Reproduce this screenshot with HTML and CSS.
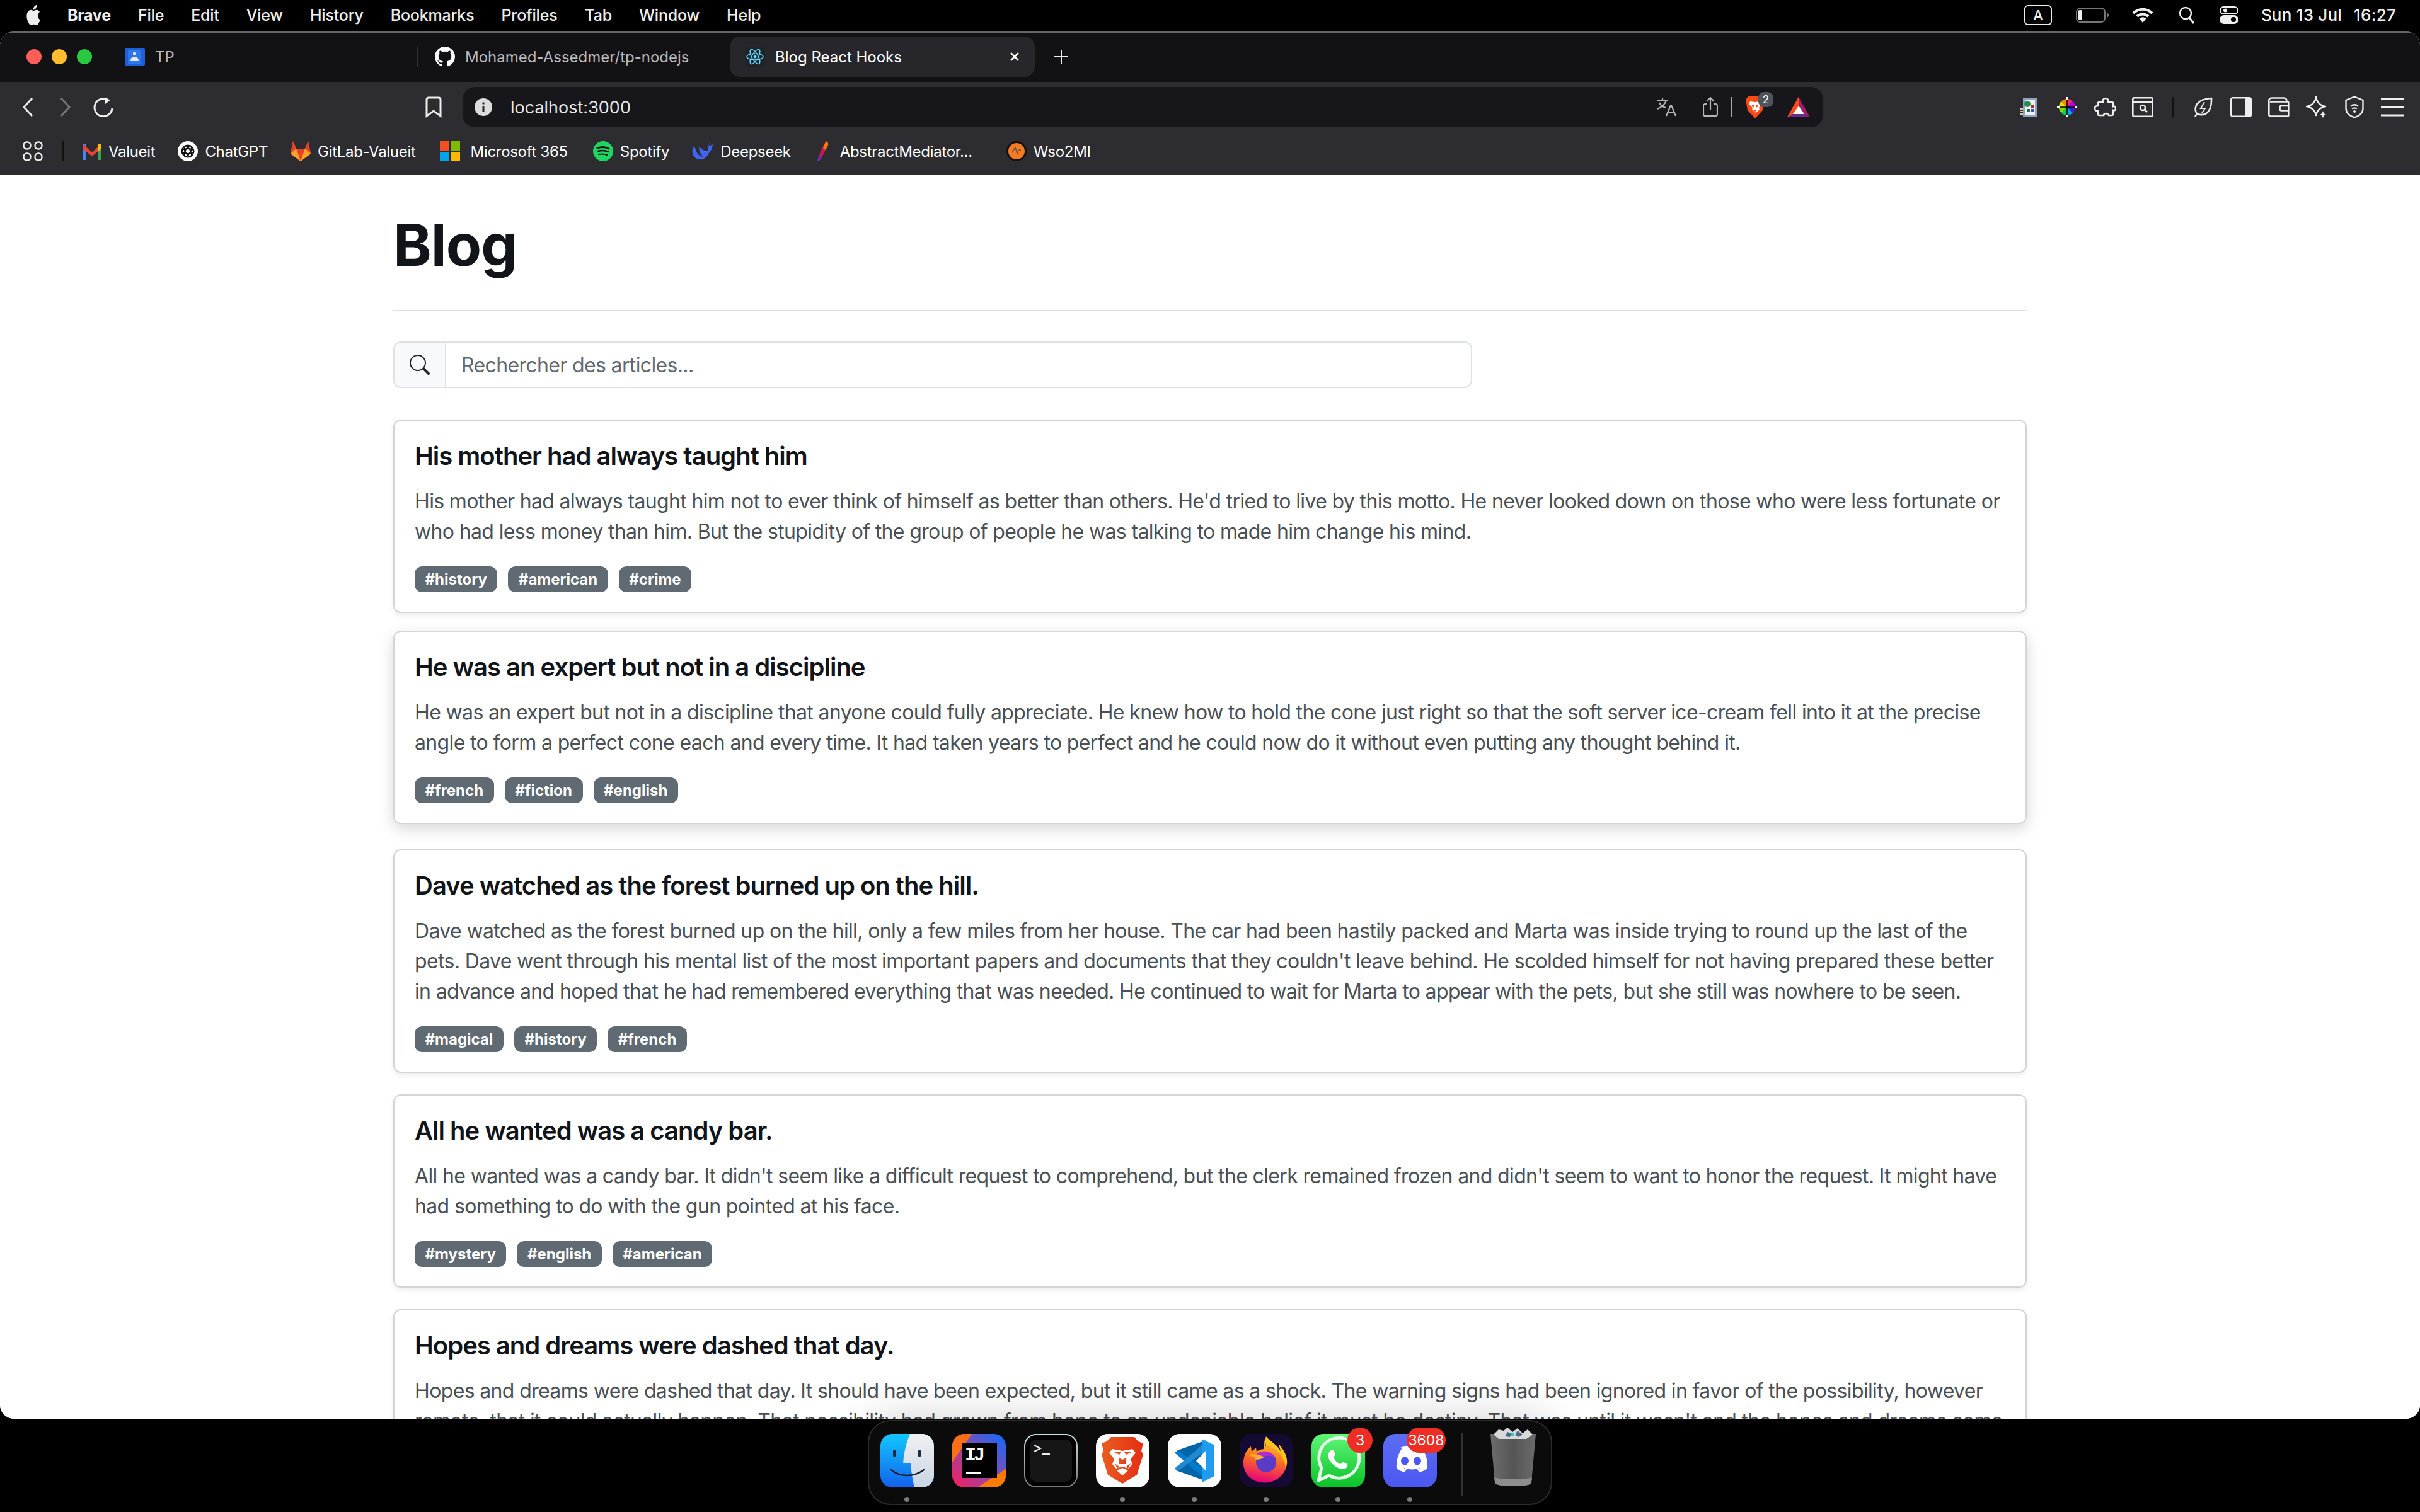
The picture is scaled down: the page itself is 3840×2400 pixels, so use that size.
FILE: index.html
```html
<!DOCTYPE html>
<html>

<head>
	<meta charset="utf-8" />
	<title>Blog React Hooks</title>
	<link rel="stylesheet" href="styles.css">
</head>

<body>
	<div class="desktop">

		<!-- macOS menu bar -->
		<header class="menubar">
			<svg class="apple" width="26" height="32" viewBox="0 0 16 16" preserveAspectRatio="none"><path fill="#eee" d="M11.182.008C11.148-.03 9.923.023 8.857 1.18c-1.066 1.156-.902 2.482-.878 2.516.024.034 1.52.087 2.475-1.258.955-1.345.762-2.391.728-2.43Zm3.314 11.733c-.048-.096-2.325-1.234-2.113-3.422.212-2.189 1.675-2.789 1.698-2.854.023-.065-.597-.79-1.254-1.157a3.692 3.692 0 0 0-1.563-.434c-.108-.003-.483-.095-1.254.116-.508.139-1.653.589-1.968.607-.316.018-1.256-.522-2.267-.665-.647-.125-1.333.131-1.824.328-.49.196-1.422.754-2.074 2.237-.652 1.482-.311 3.83-.067 4.56.244.729.625 1.924 1.273 2.796.576.984 1.34 1.667 1.659 1.899.319.232 1.219.386 1.843.067.502-.308 1.408-.485 1.766-.472.357.013 1.061.154 1.782.539.571.197 1.111.115 1.652-.105.541-.221 1.324-1.059 2.238-2.758.347-.79.505-1.217.473-1.282Z"/></svg>
			<nav class="menu">
				<span class="menu-app">Brave</span>
				<span>File</span>
				<span>Edit</span>
				<span>View</span>
				<span>History</span>
				<span>Bookmarks</span>
				<span>Profiles</span>
				<span>Tab</span>
				<span>Window</span>
				<span>Help</span>
			</nav>
			<div class="status">
				<span class="input-src">A</span>
				<svg class="st-battery" width="52" height="24" viewBox="0 0 52 24"><rect x="1" y="1" width="45" height="22" rx="6" fill="none" stroke="#777" stroke-width="2"/><rect x="4" y="4" width="6" height="16" rx="2" fill="#eee"/><path d="M49 8c2 1 3 2 3 4s-1 3-3 4z" fill="#777"/></svg>
				<svg class="st-wifi" width="34" height="26" viewBox="0 0 34 26"><path d="M2 10a21 21 0 0 1 30 0" fill="none" stroke="#eee" stroke-width="4"/><path d="M8 15a13 13 0 0 1 18 0" fill="none" stroke="#eee" stroke-width="4"/><path d="M11.500 18.500a8 8 0 0 1 11 0L17 25z" fill="#eee"/></svg>
				<svg class="st-search" width="26" height="28" viewBox="0 0 26 28"><circle cx="11" cy="11" r="9" fill="none" stroke="#eee" stroke-width="2.500"/><path d="M17 18l7 9" stroke="#eee" stroke-width="3"/></svg>
				<svg class="st-control" width="30" height="28" viewBox="0 0 30 28"><rect x="1" y="1" width="28" height="11" rx="5.500" fill="none" stroke="#eee" stroke-width="2"/><circle cx="9" cy="6.500" r="3" fill="#eee"/><rect y="14" width="30" height="14" rx="7" fill="#eee"/><circle cx="22" cy="21" r="4" fill="#000"/></svg>
				<span class="clock"><span class="clock-date">Sun 13 Jul</span>16:27</span>
			</div>
		</header>

		<div class="window">

			<!-- tab strip -->
			<div class="tabstrip">
				<div class="lights">
					<span class="light red"></span>
					<span class="light yellow"></span>
					<span class="light green"></span>
				</div>
				<div class="tab tab-first">
					<svg width="32" height="28" viewBox="0 0 32 28"><rect width="32" height="28" rx="2" fill="#1f5fd8"/><rect x="5" y="3" width="21" height="22" fill="#2f76ee"/><circle cx="15.500" cy="9" r="2.500" fill="#fff"/><path d="M9 21c0-5 3-7 6.500-7s6.500 2 6.500 7z" fill="#dfe8f8"/></svg>
					<span>TP</span>
				</div>
				<div class="tab tab-second">
					<svg width="32" height="32" viewBox="0 0 16 16"><path fill="#fff" d="M8 0C3.58 0 0 3.58 0 8c0 3.54 2.290 6.530 5.470 7.590.4.070.550-.170.550-.380 0-.190-.010-.820-.010-1.490-2.010.370-2.530-.490-2.690-.940-.090-.230-.480-.940-.820-1.130-.280-.150-.680-.520-.010-.530.630-.010 1.080.580 1.230.820.720 1.210 1.870.870 2.330.660.070-.520.280-.870.510-1.070-1.780-.200-3.640-.890-3.640-3.950 0-.870.310-1.590.820-2.150-.080-.200-.360-1.020.080-2.120 0 0 .670-.210 2.200.820.640-.180 1.320-.270 2-.270.680 0 1.360.090 2 .270 1.530-1.040 2.200-.820 2.200-.820.440 1.100.160 1.920.080 2.120.510.560.820 1.270.820 2.150 0 3.070-1.870 3.750-3.650 3.950.290.250.540.730.540 1.480 0 1.070-.010 1.930-.010 2.200 0 .210.150.460.550.380A8.013 8.013 0 0016 8c0-4.420-3.580-8-8-8z"/></svg>
					<span>Mohamed-Assedmer/tp-nodejs</span>
				</div>
				<div class="tab tab-active">
					<svg width="32" height="32" viewBox="0 0 32 32"><rect width="32" height="32" rx="3" fill="#20232a"/><g fill="none" stroke="#61dafb" stroke-width="1.500"><ellipse cx="16" cy="16" rx="13" ry="5"/><ellipse cx="16" cy="16" rx="13" ry="5" transform="rotate(60 16 16)"/><ellipse cx="16" cy="16" rx="13" ry="5" transform="rotate(120 16 16)"/></g><circle cx="16" cy="16" r="2.500" fill="#61dafb"/></svg>
					<span class="tab-title">Blog React Hooks</span>
					<svg class="tab-close" width="16" height="16" viewBox="0 0 16 16"><path d="M2 2l12 12M14 2L2 14" stroke="#fff" stroke-width="2.500"/></svg>
				</div>
				<svg class="tab-new" width="22" height="22" viewBox="0 0 22 22"><path d="M11 0v22M0 11h22" stroke="#eee" stroke-width="2"/></svg>
			</div>

			<!-- address bar -->
			<div class="toolbar">
				<span class="nav-btn"><svg width="18" height="32" viewBox="0 0 18 32"><path d="M16 2L3 16l13 14" fill="none" stroke="#eee" stroke-width="3"/></svg></span>
				<span class="nav-btn"><svg width="18" height="32" viewBox="0 0 18 32"><path d="M2 2l13 14L2 30" fill="none" stroke="#77777b" stroke-width="3"/></svg></span>
				<span class="nav-btn"><svg width="34" height="32" viewBox="0 0 34 32"><path d="M24 4.500A14 14 0 1 0 31 18" fill="none" stroke="#eee" stroke-width="3"/><path d="M19 0l9 5-8 6z" fill="#eee"/></svg></span>
				<span class="nav-btn nav-bookmark"><svg width="26" height="34" viewBox="0 0 26 34"><path d="M2 5a3 3 0 0 1 3-3h16a3 3 0 0 1 3 3v26l-11-8-11 8z" fill="none" stroke="#eee" stroke-width="3"/></svg></span>
				<div class="urlbar">
					<svg width="28" height="28" viewBox="0 0 28 28"><circle cx="14" cy="14" r="14" fill="#dcdcdc"/><rect x="12.500" y="12" width="3" height="10" fill="#222"/><rect x="12.500" y="6.500" width="3" height="3" fill="#222"/></svg>
					<span class="url">localhost:3000</span>
					<div class="url-actions">
						<svg class="ua-translate" width="32" height="30" viewBox="0 0 32 30"><g fill="none" stroke="#b5b5b5" stroke-width="2.200"><path d="M0 4h18M9 0v4M15 4c-2 7-7 11-14 14M4 8c2 4 6 7 10 8"/><path d="M15 29l7-17h1l7 17M18 24h10"/></g></svg>
						<svg class="ua-share" width="24" height="32" viewBox="0 0 24 32"><g fill="none" stroke="#b5b5b5" stroke-width="2.200"><path d="M7 11H4a3 3 0 0 0-3 3v13a3 3 0 0 0 3 3h16a3 3 0 0 0 3-3V14a3 3 0 0 0-3-3h-3"/><path d="M12 21V2M6 7l6-6 6 6"/></g></svg>
						<span class="ua-sep"></span>
						<span class="ua-brave">
							<svg width="30" height="36" viewBox="0 0 30 36"><path d="M5 0h20l5 6-3 17-12 13L3 23 0 6z" fill="#fb4a12"/><path d="M7 9l8 1 8-1 2 4-4 6 1 3-6 5-6-5 1-3-6-6z" fill="#fff"/><path d="M10 14l4 1v4l-4-2zM20 14l-4 1v4l4-2zM12 23h6l-3 2z" fill="#fb4a12"/></svg>
							<span class="ua-badge">2</span>
						</span>
						<svg class="ua-bat" width="36" height="32" viewBox="0 0 36 32"><path d="M18 0L0 32h36z" fill="#9e1f63"/><path d="M18 0L0 32l9-5z" fill="#ff4a17"/><path d="M18 0v14L9 27l-9 5z" fill="#ff4a17"/><path d="M0 32h36l-9-5H9z" fill="#662d91"/><path d="M18 14l9 13H9z" fill="#fff"/></svg>
					</div>
				</div>
				<div class="extensions">
					<span class="ext"><svg width="28" height="32" viewBox="0 0 28 32"><rect x="4" y="1" width="22" height="30" fill="#8fa3bf"/><rect x="7" y="5" width="16" height="23" fill="#eef1f6"/><circle cx="11" cy="11" r="5" fill="#2d8a4e"/><rect x="16" y="12" width="5" height="5" fill="#b02a2a"/><rect x="10" y="19" width="5" height="5" fill="#2a6a3a"/><rect x="17" y="19" width="4" height="5" fill="#3a50b0"/><path d="M0 19h4M0 23h4M0 27h4" stroke="#d8cf9a" stroke-width="2"/></svg></span>
					<span class="ext"><svg width="32" height="32" viewBox="0 0 32 32"><defs><clipPath id="wheel"><circle cx="16" cy="16" r="13"/></clipPath></defs><g clip-path="url(#wheel)"><path d="M16 16L16 0 32 0z" fill="#ff2d6b"/><path d="M16 16L32 0v16z" fill="#b100e8"/><path d="M16 16h16v16z" fill="#3b1fe0"/><path d="M16 16l16 16H16z" fill="#00a8e8"/><path d="M16 16v16H0z" fill="#00d060"/><path d="M16 16L0 32V16z" fill="#7be000"/><path d="M16 16H0V0z" fill="#f0e000"/><path d="M16 16L0 0h16z" fill="#ff8a00"/></g><path d="M16 1v30M1 16h30" stroke="#000" stroke-width="1.500"/><path d="M16 0v4M16 28v4M0 16h4M28 16h4" stroke="#fff" stroke-width="2"/></svg></span>
					<span class="ext"><svg width="34" height="34" viewBox="0 0 34 34"><path d="M14 5a5 5 0 0 1 8 0c1 1 0 3 0 4h6a2 2 0 0 1 2 2v5c2-1 4 0 4 3s-2 4-4 3v6a2 2 0 0 1-2 2h-5c-1-2-2-3-4-3s-4 1-4 3H8a2 2 0 0 1-2-2v-5c-2 0-5 0-5-4s3-4 5-4v-4a2 2 0 0 1 2-2h6c0-1-1-3 0-4z" fill="none" stroke="#eee" stroke-width="2.600"/></svg></span>
					<span class="ext"><svg width="34" height="32" viewBox="0 0 34 32"><g fill="none" stroke="#eee" stroke-width="2.600"><rect x="1.300" y="1.300" width="31.400" height="29.400" rx="2"/><path d="M1 8h32"/><circle cx="17" cy="17" r="4"/><path d="M20 20l4 4"/></g></svg></span>
					<span class="ext-sep"></span>
					<span class="ext"><svg width="30" height="32" viewBox="0 0 30 32"><g fill="none" stroke="#eee" stroke-width="2.600"><path d="M2 31l3-4C-1 17 4 3 28 2c1 22-10 29-22 25"/><path d="M17 8l-6 10h7l-5 7" stroke-width="2"/></g></svg></span>
					<span class="ext"><svg width="34" height="32" viewBox="0 0 34 32"><rect x="1.300" y="1.300" width="31.400" height="29.400" rx="2.500" fill="none" stroke="#eee" stroke-width="2.600"/><rect x="23" y="1" width="10" height="30" rx="2" fill="#eee"/></svg></span>
					<span class="ext"><svg width="34" height="32" viewBox="0 0 34 32"><g fill="none" stroke="#eee" stroke-width="2.600"><path d="M1.300 6a4 4 0 0 1 4-4.500h20a4 4 0 0 1 4 4.500M1.300 6v22a2.500 2.500 0 0 0 2.500 2.500h27a1.500 1.500 0 0 0 1.500-1.500V9a1.500 1.500 0 0 0-1.500-1.500H3"/><path d="M32 14h-11a2.500 2.500 0 0 0-2.500 2.500v2.500a2.500 2.500 0 0 0 2.500 2.500h11"/></g></svg></span>
					<span class="ext"><svg width="34" height="36" viewBox="0 0 34 36"><path d="M16 2c1 8 7 14 15 15-8 1-14 7-15 14-1-7-7-13-15-14 8-1 14-7 15-15z" fill="none" stroke="#eee" stroke-width="2.600" stroke-linejoin="round"/><path d="M27 24c.5 3 2 5 5 6-3 .5-4.500 2-5 6-.5-4-2-5.500-5-6 3-1 4.500-3 5-6z" fill="#eee"/></svg></span>
					<span class="ext"><svg width="30" height="36" viewBox="0 0 30 36"><g fill="none" stroke="#eee" stroke-width="2.400"><path d="M15 1.500L28.500 7v13c0 7-6 12-13.500 14.500C7.500 32 1.500 27 1.500 20V7z"/><path d="M9 17a8 8 0 0 1 12 0M11.500 21a4.500 4.500 0 0 1 7 0"/></g><circle cx="15" cy="25" r="2" fill="#eee"/></svg></span>
					<span class="ext"><svg width="36" height="30" viewBox="0 0 36 30"><path d="M0 2h36M0 15h36M0 28h36" stroke="#eee" stroke-width="3"/></svg></span>
				</div>
			</div>

			<!-- bookmarks bar -->
			<div class="bookmarks">
				<svg class="bm-apps" width="32" height="32" viewBox="0 0 32 32"><g fill="none" stroke="#eee" stroke-width="2.400"><rect x="1.500" y="1.500" width="11" height="11" rx="5"/><rect x="19.500" y="1.500" width="11" height="11" rx="5"/><rect x="1.500" y="19.500" width="11" height="11" rx="5"/><rect x="19.500" y="19.500" width="11" height="11" rx="5"/></g></svg>
				<span class="bm-sep"></span>
				<a class="bm"><svg width="30" height="32" viewBox="0 0 30 32"><path d="M0 30V4l5 1v25z" fill="#4285f4"/><path d="M25 30V5l5-1v26z" fill="#34a853"/><path d="M0 4l15 14L30 4v8L15 24 0 12z" fill="#ea4335"/><path d="M25 5l5-1v8l-5 4z" fill="#fbbc04"/></svg>Valueit</a>
				<a class="bm"><svg width="32" height="32" viewBox="0 0 32 32"><circle cx="16" cy="16" r="16" fill="#fff"/><g fill="none" stroke="#111" stroke-width="1.800"><circle cx="16" cy="16" r="9.500"/><ellipse cx="16" cy="16" rx="9.500" ry="4" transform="rotate(60 16 16)"/><ellipse cx="16" cy="16" rx="9.500" ry="4" transform="rotate(120 16 16)"/><ellipse cx="16" cy="16" rx="9.500" ry="4"/></g></svg>ChatGPT</a>
				<a class="bm bm-gitlab"><svg width="32" height="32" viewBox="0 0 32 32"><path d="M16 32L0 20 4 0l5 12h14l5-12 4 20z" fill="#fc6d26"/><path d="M16 32L9 12h14z" fill="#e24329"/><path d="M0 20l9-8-5-12zM32 20l-9-8 5-12z" fill="#e24329"/><path d="M0 20l16 12-7-20zM32 20L16 32l7-20z" fill="#fca326"/></svg>GitLab-Valueit</a>
				<a class="bm bm-ms"><svg width="32" height="32" viewBox="0 0 32 32"><rect width="15" height="15" fill="#f25022"/><rect x="17" width="15" height="15" fill="#7fba00"/><rect y="17" width="15" height="15" fill="#00a4ef"/><rect x="17" y="17" width="15" height="15" fill="#ffb900"/></svg>Microsoft 365</a>
				<a class="bm"><svg width="32" height="32" viewBox="0 0 32 32"><circle cx="16" cy="16" r="16" fill="#1ed760"/><g fill="none" stroke="#111" stroke-linecap="round"><path d="M7 11c6-2 13-2 18 1" stroke-width="3"/><path d="M8 16c5-1.500 11-1.500 16 1" stroke-width="2.500"/><path d="M9 21c5-1 9-1 13 1" stroke-width="2"/></g></svg>Spotify</a>
				<a class="bm"><svg width="34" height="32" viewBox="0 0 34 32"><path d="M28 1l-1 6c2 0 4-1 6-2-1 7-3 11-7 15-3 8-12 12-20 7-6-4-7-13-3-19l3 5c1 6 5 11 12 12-4-4-7-9-7-16 4 4 9 7 14 7 1-5 1-10 3-15z" fill="#3f63f5"/><path d="M20 15l2 1-2 1z" fill="#fff"/></svg>Deepseek</a>
				<a class="bm bm-abstract"><svg width="18" height="32" viewBox="0 0 18 32"><path d="M14 0c2 2 4 3 3 6L6 28c-2 3-5 4-6 3 1-3 7-22 14-31z" fill="#c2185b"/><path d="M14 0c2 2 4 3 3 6l-4 8c-2-1-3-2-4-3 1-3 3-8 5-11z" fill="#f57c00"/><path d="M6 28c-2 3-5 4-6 3l3-9c1 2 2 4 3 6z" fill="#5e35b1"/></svg>AbstractMediator...</a>
				<a class="bm bm-wso"><svg width="32" height="32" viewBox="0 0 32 32"><circle cx="16" cy="16" r="16" fill="#111"/><circle cx="16" cy="16" r="13" fill="#f47b20"/><path d="M9 18l5-8 3 10 2-6h4" fill="none" stroke="#6b5648" stroke-width="1.500"/></svg>Wso2MI</a>
			</div>

			<!-- the page -->
			<main class="page">
				<div class="container">
					<h1 class="blog-title">Blog</h1>
					<div class="search">
						<span class="search-addon"><svg width="32" height="32" viewBox="0 0 16 16"><path fill="#212529" d="M11.742 10.344a6.500 6.500 0 1 0-1.397 1.398h-.001c.030.040.062.078.098.115l3.850 3.850a1 1 0 0 0 1.415-1.414l-3.850-3.850a1.007 1.007 0 0 0-.115-.1zM12 6.500a5.500 5.500 0 1 1-11 0 5.500 5.500 0 0 1 11 0z"/></svg></span>
						<input class="search-input" type="text" placeholder="Rechercher des articles...">
					</div>

					<article class="card">
						<h5 class="card-title">His mother had always taught him</h5>
						<p class="card-text">His mother had always taught him not to ever think of himself as better than others. He'd tried to live by this motto. He never looked down on those who were less fortunate or who had less money than him. But the stupidity of the group of people he was talking to made him change his mind.</p>
						<div class="tags"><span class="tag">#history</span><span class="tag">#american</span><span class="tag">#crime</span></div>
					</article>

					<article class="card is-hover">
						<h5 class="card-title">He was an expert but not in a discipline</h5>
						<p class="card-text">He was an expert but not in a discipline that anyone could fully appreciate. He knew how to hold the cone just right so that the soft server ice-cream fell into it at the precise angle to form a perfect cone each and every time. It had taken years to perfect and he could now do it without even putting any thought behind it.</p>
						<div class="tags"><span class="tag">#french</span><span class="tag">#fiction</span><span class="tag">#english</span></div>
					</article>

					<article class="card">
						<h5 class="card-title">Dave watched as the forest burned up on the hill.</h5>
						<p class="card-text">Dave watched as the forest burned up on the hill, only a few miles from her house. The car had been hastily packed and Marta was inside trying to round up the last of the pets. Dave went through his mental list of the most important papers and documents that they couldn't leave behind. He scolded himself for not having prepared these better in advance and hoped that he had remembered everything that was needed. He continued to wait for Marta to appear with the pets, but she still was nowhere to be seen.</p>
						<div class="tags"><span class="tag">#magical</span><span class="tag">#history</span><span class="tag">#french</span></div>
					</article>

					<article class="card">
						<h5 class="card-title">All he wanted was a candy bar.</h5>
						<p class="card-text">All he wanted was a candy bar. It didn't seem like a difficult request to comprehend, but the clerk remained frozen and didn't seem to want to honor the request. It might have had something to do with the gun pointed at his face.</p>
						<div class="tags"><span class="tag">#mystery</span><span class="tag">#english</span><span class="tag">#american</span></div>
					</article>

					<article class="card">
						<h5 class="card-title">Hopes and dreams were dashed that day.</h5>
						<p class="card-text">Hopes and dreams were dashed that day. It should have been expected, but it still came as a shock. The warning signs had been ignored in favor of the possibility, however remote, that it could actually happen. That possibility had grown from hope to an undeniable belief it must be destiny. That was until it wasn't and the hopes and dreams came crashing down.</p>
					</article>
				</div>
			</main>
		</div>

		<!-- dock -->
		<footer class="dock-area">
			<div class="dock">
				<div class="dock-item running">
					<svg width="85" height="85" viewBox="0 0 85 85"><defs><linearGradient id="fb" x1="0" y1="0" x2="0" y2="1"><stop offset="0" stop-color="#12c8fd"/><stop offset="1" stop-color="#1262ee"/></linearGradient><linearGradient id="fl" x1="0" y1="0" x2="0" y2="1"><stop offset="0" stop-color="#f0f0f2"/><stop offset="1" stop-color="#c9d5e4"/></linearGradient><clipPath id="r19"><rect width="85" height="85" rx="19"/></clipPath></defs><g clip-path="url(#r19)"><rect width="85" height="85" fill="url(#fb)"/><path d="M47 0h38v85H54c-3-12-5-24-6-38H36C37 30 41 14 47 0z" fill="url(#fl)"/></g><path d="M22 27v8M62 27v8" stroke="#1b2a44" stroke-width="4" stroke-linecap="round"/><path d="M17 57c14 12 36 12 52 0" fill="none" stroke="#15202f" stroke-width="2.500" stroke-linecap="round"/></svg>
				</div>
				<div class="dock-item">
					<svg width="86" height="85" viewBox="0 0 86 85"><defs><linearGradient id="ij" x1="0" y1="1" x2="1" y2="0"><stop offset="0" stop-color="#ff1d58"/><stop offset=".5" stop-color="#8a4ab0"/><stop offset="1" stop-color="#0a6cff"/></linearGradient></defs><g clip-path="url(#r19)"><rect width="86" height="85" fill="url(#ij)"/><path d="M0 0h31L0 45z" fill="#fb6f17"/><path d="M40 85L86 55v30z" fill="#ff7a00"/></g><rect x="16" y="15" width="55" height="55" fill="#000"/><text x="20" y="42" class="ij-mark">IJ</text><rect x="22" y="60" width="23" height="4" fill="#fff"/></svg>
				</div>
				<div class="dock-item">
					<svg width="85" height="85" viewBox="0 0 85 85"><defs><linearGradient id="tb" x1="0" y1="0" x2="0" y2="1"><stop offset="0" stop-color="#c9e0e8"/><stop offset="1" stop-color="#74777a"/></linearGradient></defs><rect x="1" y="1" width="83" height="83" rx="18" fill="#000" stroke="url(#tb)" stroke-width="2"/><rect x="9" y="9" width="67" height="67" rx="10" fill="#161616"/><path d="M16 18l10 5-10 5" fill="none" stroke="#eee" stroke-width="2"/><path d="M29 32h12" stroke="#eee" stroke-width="2"/></svg>
				</div>
				<div class="dock-item running">
					<svg width="85" height="85" viewBox="0 0 85 85"><defs><linearGradient id="lion" x1="0" y1="0" x2="1" y2="0"><stop offset="0" stop-color="#ea5c1f"/><stop offset="1" stop-color="#e52e14"/></linearGradient></defs><rect width="85" height="85" rx="19" fill="#fff"/><path d="M24 5h37l6 7 8 3-3 12 3 6-10 32-23 14-23-14-10-32 3-6-3-12 8-3z" fill="url(#lion)"/><path d="M26 24l16 3 16-3 5 6-8 10 3 8-6 7-10-3-10 3-6-7 3-8-8-10z" fill="#fff"/><path d="M29 29h11l-3 4zM56 29H45l3 4zM36 38l6 3 6-3-1 10h-10zM30 47l7 5-3 3zM55 47l-7 5 3 3z" fill="url(#lion)"/><path d="M33 58l9-4 9 4-9 8z" fill="#fff"/></svg>
				</div>
				<div class="dock-item running">
					<svg width="85" height="85" viewBox="0 0 85 85"><rect width="85" height="85" rx="19" fill="#fff"/><path d="M11 30l5-4 45-16v65L16 59l-5-4 16-13z" fill="#0065a9"/><path d="M11 30l5-4 45 33-7 8L11 30z" fill="#007acc"/><path d="M11 55l5 4 45-33-7-8z" fill="#1f8ad2"/><path d="M54 8l20 10v49L54 77z" fill="#1f9cf0"/><path d="M61 26v33l-16-16z" fill="#fff"/></svg>
				</div>
				<div class="dock-item running">
					<svg width="85" height="85" viewBox="0 0 85 85"><defs><linearGradient id="ff" x1=".6" y1="0" x2=".4" y2="1"><stop offset="0" stop-color="#ffd33a"/><stop offset=".45" stop-color="#ff7a1a"/><stop offset="1" stop-color="#e6007a"/></linearGradient></defs><rect width="85" height="85" rx="19" fill="#150a33"/><path d="M42 4c-3 8-3 13 0 16 12 0 20 4 24 10l-4-14c12 14 18 28 9 44-8 13-22 19-37 17C18 75 5 62 6 44 7 32 12 24 18 20l1 8 7-6 1 6c4-3 8-4 12-4-1-8 0-14 3-20z" fill="url(#ff)"/><path d="M42 4c6 8 20 14 24 26l-4-14c10 12 16 24 11 38-2-18-14-34-31-34-1-6-2-10 0-16z" fill="#ffc21f"/><circle cx="42" cy="45" r="16" fill="#5b3bc5"/><path d="M27 32c10-8 26-4 30 6-8-6-16-3-20-1z" fill="#b32bd0"/><path d="M15 33c8-2 18 0 24 4-4 3-10 5-16 3 2-1 3-1 4-2-4-1-9-2-12-5z" fill="#ffb030"/></svg>
				</div>
				<div class="dock-item running">
					<svg width="85" height="85" viewBox="0 0 85 85"><defs><linearGradient id="wa" x1="0" y1="0" x2="0" y2="1"><stop offset="0" stop-color="#5ff777"/><stop offset="1" stop-color="#0ac229"/></linearGradient></defs><rect width="85" height="85" rx="19" fill="url(#wa)"/><path d="M11 74l5-20a32 32 0 1 1 12 12z" fill="none" stroke="#e8f8ea" stroke-width="5" stroke-linejoin="round"/><path d="M29 28c2-3 5-3 6-2l3 6c0 2-2 3-3 5 2 5 6 9 11 11 2-1 3-3 5-3l6 3c1 2 0 5-2 6-4 3-9 2-15-1-6-4-11-9-13-15-1-4 0-8 2-10z" fill="#fff"/></svg>
					<span class="dock-badge dock-badge-wa">3</span>
				</div>
				<div class="dock-item running">
					<svg width="85" height="85" viewBox="0 0 85 85"><defs><linearGradient id="dc" x1="0" y1="0" x2="0" y2="1"><stop offset="0" stop-color="#5c6df4"/><stop offset="1" stop-color="#4a57f2"/></linearGradient></defs><rect width="85" height="85" rx="19" fill="url(#dc)"/><path d="M27 22c5-2 9-3 11-3l2 3c3-.5 5-.5 8 0l2-3c3 0 7 1 11 3 6 9 10 20 9 33-4 3-9 5-13 6l-3-5c2-.5 4-1.500 5-2.500-9 4-18 4-27 0 1 1 3 2 5 2.500l-3 5c-4-1-9-3-13-6-1-13 3-24 9-33z" fill="#fff"/><ellipse cx="34" cy="43" rx="6" ry="6.500" fill="#4a57f2"/><ellipse cx="54" cy="43" rx="6" ry="6.500" fill="#4a57f2"/></svg>
					<span class="dock-badge dock-badge-dc">3608</span>
				</div>
				<span class="dock-sep"></span>
				<div class="dock-item dock-trash">
					<svg width="74" height="96" viewBox="0 0 74 96"><defs><linearGradient id="tr" x1="0" y1="0" x2="1" y2="0"><stop offset="0" stop-color="#6d6d6d"/><stop offset=".5" stop-color="#555"/><stop offset="1" stop-color="#6b6b6b"/></linearGradient></defs><path d="M1 13h72l-7 77c-1 4-10 6-29 6S9 94 8 90z" fill="url(#tr)"/><path d="M8 90c1 4 10 6 29 6s28-2 29-6l1-8c-6 4-52 4-60 0z" fill="#8d8d8d"/><path d="M6 14l8-8 8 2 6-5 8 7 8-6 8 8 8-6 8 8-10 7H14z" fill="#d8d8d8"/><path d="M28 10l6 2-2 6-8-1zM44 8l8 6-6 4-6-3z" fill="#4a6a8a"/><path d="M34 12h5v4h-5z" fill="#42c0d0"/></svg>
				</div>
			</div>
		</footer>
	</div>
</body>

</html>
```

FILE: styles.css
```css
* {
	box-sizing: border-box;
}

html, body {
	margin: 0;
	height: 100%;
	background: #000;
}

body {
	font-family: 'Inter', 'Liberation Sans', sans-serif;
}

svg {
	display: block;
	flex-shrink: 0;
}

.desktop {
	display: flex;
	flex-direction: column;
	width: 3840px;
	height: 2400px;
	overflow: hidden;
}

/* menu bar */
.menubar {
	display: flex;
	align-items: center;
	flex: 0 0 50px;
	padding: 0 0 3px 40px;
	color: #eee;
	font-size: 25px;
	font-weight: 500;
	letter-spacing: -.2px;
}

.apple {
	margin-right: 41px;
}

.menu {
	display: flex;
	gap: 43px;
}

.menu-app {
	font-weight: 700;
}

.status {
	display: flex;
	align-items: center;
	margin-left: auto;
	padding-right: 38px;
}

.input-src {
	display: flex;
	align-items: center;
	justify-content: center;
	width: 44px;
	height: 32px;
	border: 2px solid #eee;
	border-radius: 6px;
	font-size: 22px;
}

.st-battery {
	margin-left: 38px;
}

.st-wifi {
	margin-left: 37px;
}

.st-search {
	margin-left: 40px;
}

.st-control {
	margin-left: 39px;
}

.clock {
	margin-left: 36px;
	font-size: 26px;
	letter-spacing: .2px;
}

.clock-date {
	margin-right: 19px;
}

/* browser window */
.window {
	display: flex;
	flex-direction: column;
	flex: 0 0 2202px;
	overflow: hidden;
	border-radius: 22px;
	background: #fff;
}

.tabstrip {
	display: flex;
	align-items: center;
	flex: 0 0 80px;
	padding-bottom: 2px;
	border-top: 2px solid #666;
	background: #121214;
	color: #b9b9bb;
	font-size: 24px;
}

.lights {
	display: flex;
	gap: 16px;
	margin-left: 42px;
	margin-right: 28px;
}

.light {
	width: 24px;
	height: 24px;
	border-radius: 50%;
}

.red {
	background: #ff5f57;
}

.yellow {
	background: #febc2e;
}

.green {
	background: #28c840;
}

.tab {
	display: flex;
	align-items: center;
	gap: 16px;
	height: 64px;
}

.tab-first {
	width: 488px;
	padding-left: 24px;
}

.tab-second {
	width: 496px;
	padding-left: 28px;
	background: linear-gradient(#333, #333) left center / 2px 32px no-repeat;
}

.tab-active {
	width: 484px;
	padding: 0 24px;
	border-radius: 16px;
	background: #27272b;
	color: #fff;
}

.tab-title {
	flex: 1;
}

.tab-new {
	margin-left: 31px;
}

/* address bar */
.toolbar {
	display: flex;
	align-items: center;
	flex: 0 0 72px;
	padding: 8px 14px 0;
	background: #2c2c31;
}

.nav-btn {
	display: flex;
	align-items: center;
	justify-content: center;
	width: 60px;
}

.nav-bookmark {
	margin-left: 464px;
}

.urlbar {
	display: flex;
	align-items: center;
	width: 2159px;
	height: 64px;
	margin-left: 16px;
	padding: 0 21px 0 19px;
	border-radius: 20px;
	background: #17171b;
	color: #e6e6e6;
	font-size: 27px;
}

.url {
	margin-left: 29px;
}

.url-actions {
	display: flex;
	align-items: center;
	margin-left: auto;
}

.ua-share {
	margin-left: 41px;
}

.ua-sep {
	width: 2px;
	height: 32px;
	margin: 0 22px 0 20px;
	background: #aaa;
}

.ua-brave {
	position: relative;
}

.ua-badge {
	position: absolute;
	top: -6px;
	left: 20px;
	width: 24px;
	height: 24px;
	border-radius: 9px;
	background: #50525c;
	color: #fff;
	font-size: 17px;
	line-height: 24px;
	text-align: center;
}

.ua-bat {
	margin-left: 36px;
}

.extensions {
	display: flex;
	align-items: center;
	margin-left: auto;
}

.ext {
	display: flex;
	align-items: center;
	justify-content: center;
	width: 60px;
}

.ext-sep {
	width: 4px;
	height: 32px;
	margin: 0 16px;
	border-radius: 2px;
	background: #111;
}

/* bookmarks bar */
.bookmarks {
	display: flex;
	align-items: center;
	flex: 0 0 76px;
	padding-left: 36px;
	background: #2c2c31;
	color: #fff;
	font-size: 24px;
	letter-spacing: -.3px;
}

.bm-sep {
	width: 3px;
	height: 32px;
	margin: 0 30px;
	background: #111;
}

.bm {
	display: flex;
	align-items: center;
	gap: 11px;
	margin-right: 36px;
	white-space: nowrap;
}

.bm-gitlab {
	margin-right: 38px;
}

.bm-ms {
	gap: 17px;
	margin-right: 40px;
}

.bm-abstract {
	gap: 18px;
	margin: 0 54px 0 6px;
}

/* the page itself */
.page {
	flex: 1;
	overflow: hidden;
	background: #fff;
	color: #212529;
}

.container {
	width: 2592px;
	margin: 0 auto;
}

.blog-title {
	margin: 0 0 48px;
	padding: 52px 0 44px;
	border-bottom: 2px solid #dee2e6;
	color: #111418;
	font-size: 92px;
	font-weight: 700;
	letter-spacing: -1px;
	line-height: 118px;
}

.search {
	display: flex;
	width: 1712px;
	height: 74px;
	margin-bottom: 50px;
}

.search-addon {
	display: flex;
	align-items: center;
	justify-content: center;
	width: 84px;
	border: 2px solid #dee2e6;
	border-radius: 12px 0 0 12px;
	background: #f8f9fa;
}

.search-input {
	flex: 1;
	padding: 0 24px;
	border: 2px solid #dee2e6;
	border-left: 0;
	border-radius: 0 12px 12px 0;
	font-family: inherit;
	font-size: 32px;
	letter-spacing: -.64px;
	outline: none;
}

.search-input::placeholder {
	color: #62686e;
}

.card {
	margin-bottom: 34px;
	padding: 32px 32px 31px;
	border: 2px solid #d4d5d6;
	border-radius: 12px;
	background: #fff;
	box-shadow: 0 4px 8px rgba(0, 0, 0, .075);
}

.card.is-hover {
	transform: translateY(-6px);
	box-shadow: 0 8px 24px rgba(0, 0, 0, .16);
}

.card-title {
	margin: 0 0 24px;
	color: #111418;
	font-size: 40px;
	font-weight: 600;
	letter-spacing: -1px;
	line-height: 48px;
}

.card-text {
	margin: 0 0 31px;
	color: #4a4f54;
	font-size: 32px;
	letter-spacing: -.64px;
	line-height: 48px;
}

.tags {
	display: flex;
	gap: 17px;
}

.tag {
	padding: 0 16.500px;
	border-radius: 12px;
	background: #5f6a73;
	color: #fff;
	font-size: 24px;
	font-weight: 700;
	line-height: 41px;
}

/* dock */
.dock-area {
	position: relative;
	display: flex;
	justify-content: center;
	flex: 1;
	padding-top: 2px;
}

.dock {
	display: flex;
	align-items: flex-start;
	gap: 29px;
	width: 1086px;
	height: 135px;
	padding: 20px 20px 0 18px;
	border: 2px solid #2b2b2b;
	border-radius: 36px;
	background: #0b0b0b;
	box-shadow: 0 0 70px rgba(0, 0, 0, .2);
}

.dock-item {
	position: relative;
	width: 85px;
	height: 85px;
}

.running::after {
	content: "";
	position: absolute;
	left: 38px;
	top: 100px;
	width: 8px;
	height: 8px;
	border-radius: 50%;
	background: #7a7a7a;
}

.dock-badge {
	position: absolute;
	top: -10px;
	height: 40px;
	border-radius: 20px;
	background: #ee2d25;
	color: #fff;
	font-size: 23px;
	line-height: 40px;
	text-align: center;
}

.dock-badge-wa {
	right: -12px;
	width: 40px;
}

.dock-badge-dc {
	left: 37px;
	width: 62px;
}

.dock-sep {
	width: 2px;
	height: 100px;
	margin: -2px 0 0 10px;
	background: #333;
}

.dock-trash {
	width: 74px;
	margin: -13px 0 0 14px;
}

.ij-mark {
	fill: #fff;
	font-family: 'Liberation Mono', monospace;
	font-size: 30px;
	font-weight: 700;
	letter-spacing: -4px;
}
```
